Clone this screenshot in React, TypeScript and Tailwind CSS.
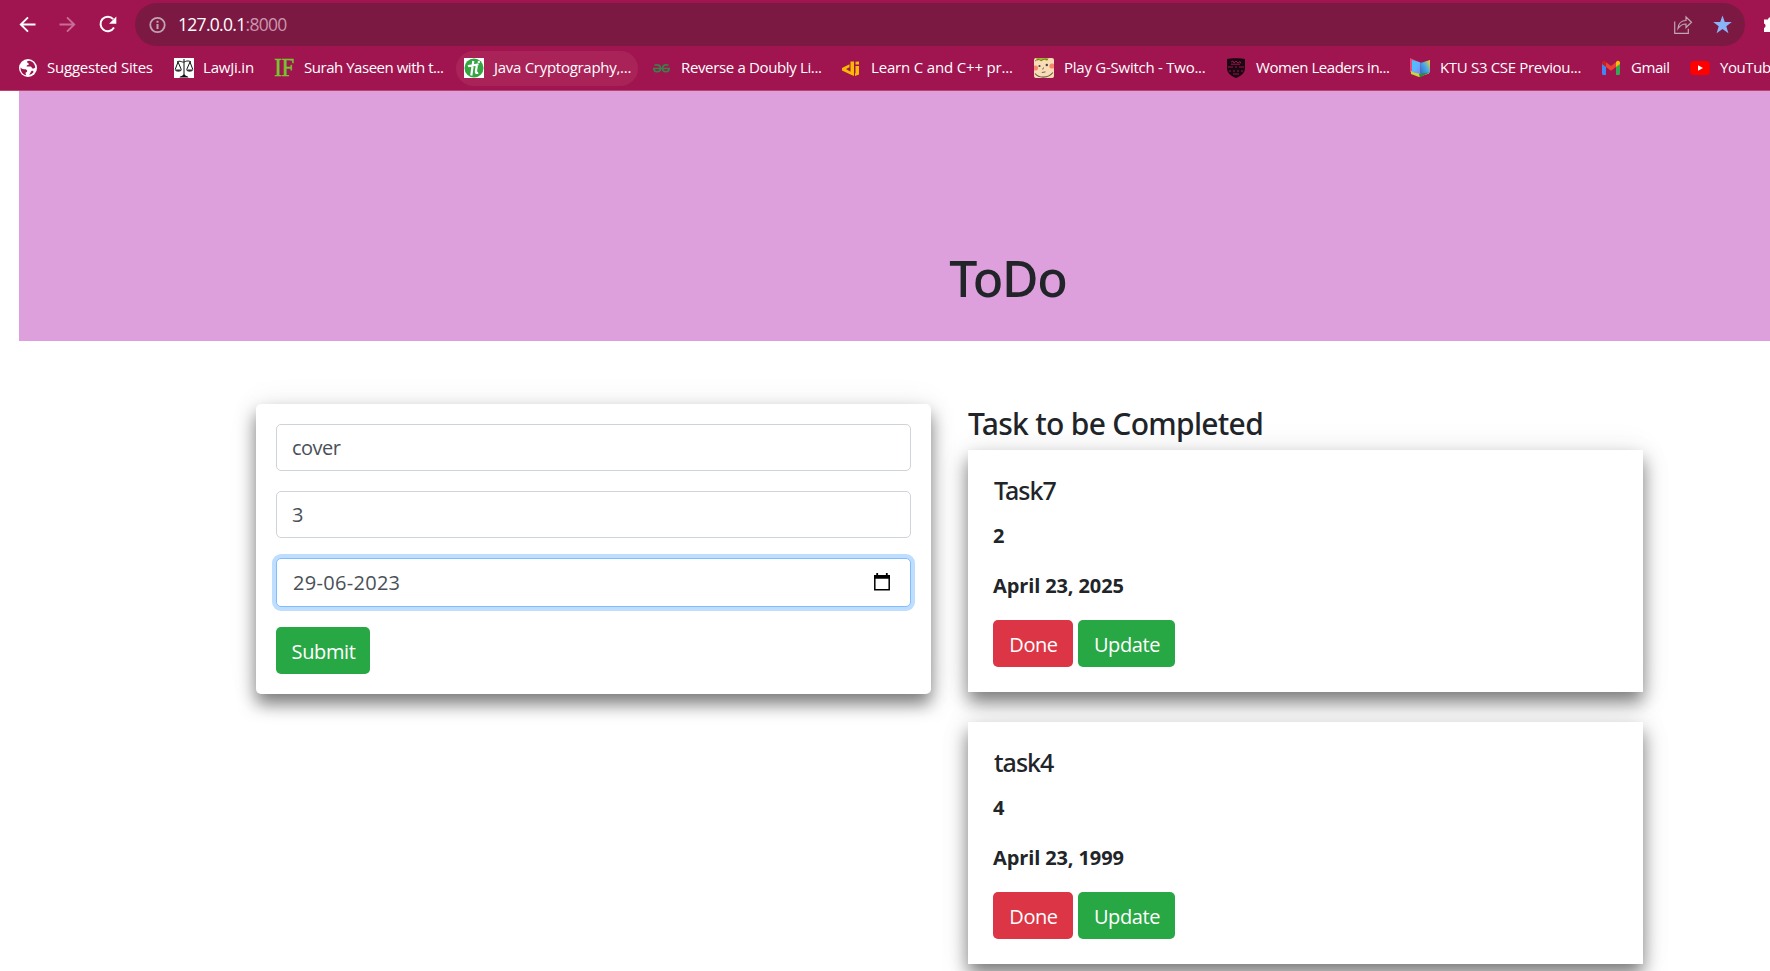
import React from "react";

const Svg = ({ children, className = "", box = "0 0 20 20" }: { children: React.ReactNode; className?: string; box?: string }) => (
  <svg viewBox={box} className={`block shrink-0 ${className}`} fill="none">
    {children}
  </svg>
);

const Globe = () => (
  <Svg className="h-5 w-5">
    <circle cx="10" cy="10" r="9" fill="#fff" />
    <path d="M11 2.8c-3 .2-2 2-.5 2.6 1 .5 0 1.300-.8 1.600-1.400.6-1.400 1.600-.4 1.600h3c1.800.2 1 1.800 2.600 2 1.300 0 2-.6 2.400-1C17 6 14.500 3 11 2.800zM2.600 9.200c.6 1 1.800 2 3.600 2 2 0 3 .5 3 1.700 0 1.300-1.600 1-1.600 2.300 0 .8.3 1.500.6 2C5 16.700 2.200 13.500 2.600 9.200zM13.500 13c-1 1-1 2.500-2.500 3.800 2-.2 3.600-1.200 4.600-2.800-.4-1-1.200-1.600-2.100-1z" fill="#a0154f" />
  </Svg>
);

const Scales = () => (
  <Svg className="h-5 w-5">
    <rect width="20" height="20" fill="#fff" />
    <path d="M10 1v16M3 4c3-2 5 .6 7 0s4-2 7 0M4 4L1.200 11.500M4 4l3.300 7.500M16 4l-3.300 7.500M16 4l2.800 7.500" stroke="#111" strokeWidth="1" />
    <path d="M.8 11.500h7c-.6 3-6.400 3-7 0zM12.200 11.500h7c-.6 3-6.400 3-7 0z" fill="#333" />
    <path d="M5.500 19.500c.5-2 3-1 4.500-3.500 1.500 2.500 4 1.500 4.500 3.500z" fill="#111" />
  </Svg>
);

const Letters = () => (
  <span className="flex h-5 w-5 shrink-0 items-center justify-center font-['Liberation_Serif',serif] text-[26px] leading-5 tracking-[-0.5px] text-[#76c52f] [-webkit-text-stroke:0.5px_#76c52f]">
    <span className="inline-block scale-x-[0.88]">IF</span>
  </span>
);

const Tutorial = () => (
  <Svg className="h-5 w-5">
    <rect width="20" height="20" fill="#fff" />
    <circle cx="10" cy="10" r="9.500" fill="#35a542" />
    <path d="M9.300 3L7.300 17.500M4 8.300c2.500-1.200 4.500-.2 10.500-2M12.800 7.500l-.9 6c-.2 1.600.6 1.800 2.200 1" stroke="#fff" strokeWidth="2.200" />
    <circle cx="14.800" cy="4" r="1.200" fill="#fff" />
  </Svg>
);

const Geeks = () => (
  <Svg className="h-5 w-5">
    <path d="M1 10.500h17M2.500 7.300c3-1.200 6-.3 6 3.200 0 4.500-6.500 4-6.500.5M16.500 7.300c-3-1.200-6-.3-6 3.200 0 4.500 6.500 4 6.500.5" stroke="#3c7f4a" strokeWidth="1.700" />
  </Svg>
);

const Dj = () => (
  <Svg className="h-5 w-5">
    <path d="M8.500 6.200v3L5 11l4.500 2.800V3.500H13V18L9.500 16.500 1 12.500V10zM14.500 8h3.500v8.500L14 18v-2.500l.5-.5zM14.500 3.800l3.500-.4v3h-3.500z" fill="#fbb906" />
  </Svg>
);

const Face = () => (
  <Svg className="h-5 w-5">
    <rect width="20" height="20" rx="2" fill="#f9dcb6" />
    <path d="M2 0l1.500 3L6 1l1 2.500L10 1l2.500 2L15 0z" fill="#a9b82b" />
    <path d="M1 3l3-2 3 1.500L11 1l3 .8" stroke="#5f6c14" strokeWidth=".8" />
    <circle cx="1.500" cy="10" r="2.500" fill="#f4866a" />
    <circle cx="18" cy="8" r="2.600" fill="#f4866a" />
    <circle cx="5.500" cy="8" r="1.100" fill="#444" />
    <circle cx="12.800" cy="7" r="1.200" fill="#444" />
    <path d="M9.500 9.500l-.8 2M7.800 14.500l3.700-.6" stroke="#555" strokeWidth=".9" />
    <path d="M1 15.500c4 5 13 5 18-1" stroke="#6a5a44" strokeWidth="1.100" />
  </Svg>
);

const Shield = () => (
  <Svg className="h-5 w-5">
    <path d="M1 1c3-1 15-1 18 0v9c0 5-4 8-9 10-5-2-9-5-9-10z" fill="#190711" />
    <path d="M5 4l2-1 1 2 2-2 2 2 2-1.500 1 2M5 6.200h9M2 9h5M13 9h5M9 9h2M3 13h2M7 13h2M11 13h2M15 13h2M7 16h6" stroke="#a0154f" strokeWidth="1" />
  </Svg>
);

const Book = () => (
  <Svg className="h-5 w-5">
    <defs>
      <linearGradient id="pageLeft" x1="0" y1="0" x2="1" y2="1">
        <stop stopColor="#3cc8ff" />
        <stop offset=".5" stopColor="#5db5ff" />
        <stop offset="1" stopColor="#8f7bf5" />
      </linearGradient>
      <linearGradient id="pageRight" x1="1" y1="0" x2="0" y2="1">
        <stop stopColor="#ffd21c" />
        <stop offset=".45" stopColor="#4aa8e8" />
        <stop offset="1" stopColor="#2466c8" />
      </linearGradient>
    </defs>
    <path d="M0 0l9 4v13L0 14z" fill="#e8477f" />
    <path d="M1 13l9 2.500 9-2.500v2.500L9 19l-8-3z" fill="#c9d932" />
    <path d="M2 2l8.500 2.500V16L2 14z" fill="url(#pageLeft)" />
    <path d="M10.500 5L20 2v12.500L10.500 18z" fill="url(#pageRight)" />
    <path d="M9 16l10-1.500-9 5z" fill="#2c8b3d" />
  </Svg>
);

const Gmail = () => (
  <Svg className="h-5 w-5">
    <path d="M1 5.500l4 3V17H2.200C1.500 17 1 16.500 1 15.800z" fill="#4285f4" />
    <path d="M15 8.500l4-3v10.300c0 .7-.5 1.200-1.200 1.200H15z" fill="#34a853" />
    <path d="M5 4.200l5 3.800 5-3.800v4.700l-5 3.800-5-3.800z" fill="#ea4335" />
    <path d="M1 6V4.800c0-1.700 1.900-2.500 3.200-1.500L5 4v5z" fill="#c5221f" />
    <path d="M19 6V4.800c0-1.700-1.900-2.500-3.200-1.500L15 4v5z" fill="#fbbc04" />
  </Svg>
);

const YouTube = () => (
  <Svg className="h-5 w-5">
    <rect x=".3" y="3" width="19.400" height="14" rx="3.500" fill="#f00" />
    <path d="M8 7.200v5.600l5-2.800z" fill="#fff" />
  </Svg>
);

const bookmarks = [
  { label: "Suggested Sites", icon: <Globe />, width: "w-[156px]", text: "-ml-px tracking-[-0.22px]" },
  { label: "LawJi.in", icon: <Scales />, width: "w-[100px]", text: "-ml-px tracking-[-0.2px]" },
  { label: "Surah Yaseen with t...", icon: <Letters />, width: "w-[190px]", text: "tracking-[-0.47px]" },
  { label: "Java Cryptography,...", icon: <Tutorial />, width: "w-[188px]", text: "tracking-[-0.28px]", hovered: true },
  { label: "Reverse a Doubly Li...", icon: <Geeks />, width: "w-[189px]", text: "-ml-px tracking-[-0.35px]" },
  { label: "Learn C and C++ pr...", icon: <Dj />, width: "w-[193px]", text: "tracking-[-0.17px]" },
  { label: "Play G-Switch - Two...", icon: <Face />, width: "w-[192px]", text: "tracking-[-0.25px]" },
  { label: "Women Leaders in...", icon: <Shield />, width: "w-[184px]", text: "tracking-[-0.47px]" },
  { label: "KTU S3 CSE Previou...", icon: <Book />, width: "w-[191px]", text: "tracking-[-0.32px]" },
  { label: "Gmail", icon: <Gmail />, width: "w-[89px]", text: "tracking-[-0.42px]" },
  { label: "YouTub", icon: <YouTube />, width: "w-[110px]", text: "tracking-[-0.42px]" },
];

function BrowserChrome() {
  return (
    <header className="h-[91px] border-b border-[#b8446f] bg-[#a0154f]">
      <div className="flex h-[46px] items-start overflow-hidden pt-[3px]">
        <div className="flex h-[43px] w-[135px] shrink-0 items-center pl-[18px]">
          <Svg className="h-5 w-5">
            <path d="M17.500 9.500H3M10 2.300L2.800 9.500 10 16.700" stroke="#fff" strokeWidth="1.900" />
          </Svg>
          <Svg className="ml-5 h-5 w-5">
            <path d="M1.500 9.500H16M9 2.300l7.200 7.200L9 16.700" stroke="#c96d95" strokeWidth="1.900" />
          </Svg>
          <Svg className="ml-5 h-5 w-5">
            <path d="M16 12.500a7.200 7.200 0 1 1-.8-8.300" stroke="#fff" strokeWidth="2" />
            <path d="M18.300 1.500v7.200h-7.200z" fill="#fff" />
          </Svg>
        </div>
        <div className="flex h-[43px] w-[1610px] shrink-0 items-center rounded-full bg-[#7c1942] pl-[14px] pr-[12px]">
          <Svg className="h-[18px] w-[18px]" box="0 0 18 18">
            <circle cx="8.500" cy="9" r="7.200" stroke="#c0a5b3" strokeWidth="1.800" />
            <path d="M8.500 8v5M8.500 4.700v2" stroke="#c0a5b3" strokeWidth="2" />
          </Svg>
          <span className="ml-[11px] whitespace-nowrap text-[17.500px] tracking-[-0.7px] text-white">
            127.0.0.1<span className="text-[#c995ae]">:8000</span>
          </span>
          <Svg className="ml-auto h-5 w-5">
            <path d="M1.700 6.500v11.800h13.600v-4.500M5 13.500c.3-5 3.500-8 8-8V2l5.500 5.300L13 12.500V9c-3.500 0-6 1.500-8 4.500z" stroke="#c0a5b3" strokeWidth="1.200" />
          </Svg>
          <Svg className="ml-5 h-5 w-5">
            <path d="M9.500 .5l2.300 6.500h7l-5.500 4.200 2.100 7.100L9.500 14l-5.900 4.300 2.100-7.100L.2 7h7z" fill="#8ab4f8" />
          </Svg>
        </div>
        <Svg className="ml-[18px] mt-[12px] h-5 w-5">
          <path d="M1 4.500h4a2.300 2.300 0 0 1 4.600 0H14v4.300a2.300 2.300 0 0 1 0 4.600V17H1v-4a2.400 2.400 0 0 0 0-4.500z" fill="#fff" />
        </Svg>
      </div>
      <nav className="flex h-[44px] items-center overflow-hidden pl-[18px]">
        {bookmarks.map((b) => (
          <div key={b.label} className={`h-[35px] shrink-0 ${b.width}`}>
            <div
              className={`-ml-2 flex h-[35px] w-[182px] items-center gap-[10px] rounded-full pl-2 ${b.hovered ? "bg-[#a92358]" : ""}`}
            >
              {b.icon}
              <span className={`whitespace-nowrap pb-[2px] text-[15px] text-white ${b.text}`}>{b.label}</span>
            </div>
          </div>
        ))}
      </nav>
    </header>
  );
}

const shadow = "shadow-[0_10px_17px_rgba(0,0,0,0.5),0_0_32px_rgba(0,0,0,0.07)]";
const field = "flex h-[47px] items-center rounded-[5px] border bg-white px-[15px] text-[20px] tracking-[-0.5px] text-[#495057]";
const button = "flex h-[47px] items-center justify-center rounded-[5px] pl-px pt-[2px] text-[20px] tracking-[-0.4px] text-white";

function TaskForm() {
  return (
    <form className={`flex h-[290px] w-[675px] shrink-0 flex-col gap-5 rounded-[5px] bg-white p-5 ${shadow}`}>
      <div className={`${field} border-[#ced4da]`}>cover</div>
      <div className={`${field} border-[#ced4da]`}>3</div>
      <div className={`${field} h-[49px] border-[#80bdff] pl-4 pr-5 shadow-[0_0_0_4px_#bfdeff]`}>
        <span className="tracking-[0.3px]">29-06-2023</span>
        <Svg className="ml-auto h-5 w-4" box="0 0 16 20">
          <path d="M.8 3.500h14.400v13.200H.8z" stroke="#000" strokeWidth="1.500" />
          <path d="M0 2h16v3.800H0zM2.300 0h1.800v3H2.300zM11.900 0h1.800v3h-1.800z" fill="#000" />
        </Svg>
      </div>
      <button type="button" className={`${button} w-[94px] bg-[#28a745]`}>Submit</button>
    </form>
  );
}

const tasks = [
  { name: "Task7", priority: "2", date: "April 23, 2025" },
  { name: "task4", priority: "4", date: "April 23, 1999" },
];

export default function App() {
  return (
    <div className="h-[971px] w-[1770px] overflow-hidden bg-white font-['Open_Sans','Noto_Sans',sans-serif] text-[#212529]">
      <BrowserChrome />
      <div className="ml-[19px] flex h-[250px] items-end justify-center bg-[#dda0dd] pb-[33px] pl-[227px]">
        <h1 className="font-['Noto_Sans','Open_Sans',sans-serif] text-[50px] font-medium leading-[60px] tracking-[-1.2px]">ToDo</h1>
      </div>
      <main className="flex items-start gap-[37px] pl-[256px] pt-[63px]">
        <TaskForm />
        <section className="w-[675px]">
          <h4 className="mb-[9px] pt-[2px] font-['Noto_Sans','Open_Sans',sans-serif] text-[30px] font-medium leading-[35px] tracking-[-0.7px]">
            Task to be Completed
          </h4>
          <div className="flex flex-col gap-[30px]">
            {tasks.map((t) => (
              <article key={t.name} className={`h-[242px] bg-white p-[25px] ${shadow}`}>
                <h5 className="mb-[16px] pl-px font-['Noto_Sans','Open_Sans',sans-serif] text-[25px] font-medium leading-[30px] tracking-[-1px]">{t.name}</h5>
                <p className="mb-5 text-[20px] font-bold leading-[30px] tracking-[-0.12px]">{t.priority}</p>
                <p className="mb-[19px] text-[20px] font-bold leading-[30px] tracking-[-0.12px]">{t.date}</p>
                <div className="flex gap-[5px]">
                  <button type="button" className={`${button} w-[80px] bg-[#dc3545]`}>Done</button>
                  <button type="button" className={`${button} w-[97px] bg-[#28a745]`}>Update</button>
                </div>
              </article>
            ))}
          </div>
        </section>
      </main>
    </div>
  );
}
